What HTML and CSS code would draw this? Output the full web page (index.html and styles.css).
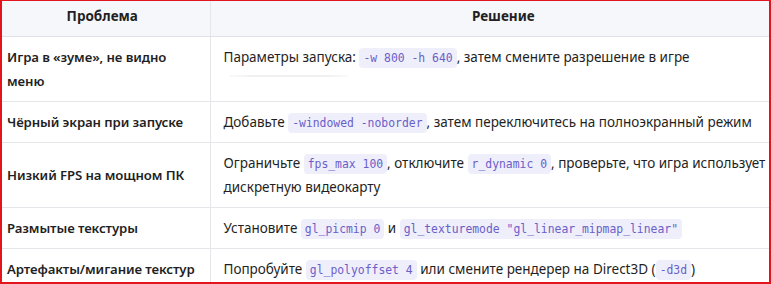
FILE: index.html
```html
<!DOCTYPE html>
<html lang="ru">
<head>
<meta charset="utf-8">
<link rel="stylesheet" href="styles.css">
</head>
<body>
<div class="frame">
  <table class="fixes">
    <thead>
      <tr><th class="col-problem">Проблема</th><th>Решение</th></tr>
    </thead>
    <tbody>
      <tr>
        <td class="problem">Игра в «зуме», не видно меню</td>
        <td>Параметры запуска: <code>-w 800 -h 640</code>, затем смените разрешение в игре<div class="ghost"></div></td>
      </tr>
      <tr>
        <td class="problem">Чёрный экран при запуске</td>
        <td>Добавьте <code>-windowed -noborder</code>, затем переключитесь на полноэкранный режим</td>
      </tr>
      <tr>
        <td class="problem">Низкий FPS на мощном ПК</td>
        <td>Ограничьте <code>fps_max 100</code>, отключите <code>r_dynamic 0</code>, проверьте, что игра использует дискретную видеокарту</td>
      </tr>
      <tr>
        <td class="problem">Размытые текстуры</td>
        <td>Установите <code>gl_picmip 0</code> и <code>gl_texturemode "gl_linear_mipmap_linear"</code></td>
      </tr>
      <tr>
        <td class="problem">Артефакты/мигание текстур</td>
        <td>Попробуйте <code>gl_polyoffset 4</code> или смените рендерер на Direct3D (<code>-d3d</code>)</td>
      </tr>
    </tbody>
  </table>
</div>
</body>
</html>
```
FILE: styles.css
```css
html, body {
  margin: 0;
  padding: 0;
  background: #ffffff;
}
.frame {
  width: 771px;
  height: 284px;
  box-sizing: border-box;
  border: 2px solid #e3141c;
  border-top-width: 1px;
  overflow: hidden;
  background: #ffffff;
}
.fixes {
  border-collapse: collapse;
  table-layout: fixed;
  width: 801px;
  margin-left: -7px;
  margin-top: -5px;
  font-family: "Noto Sans", "Open Sans", sans-serif;
  font-size: 13.5px;
  line-height: 24px;
  color: #1f1f24;
}
.fixes th {
  box-sizing: border-box;
  background: #f6f7fa;
  font-weight: 700;
  text-align: center;
  padding: 8px 12px;
  border-bottom: 1px solid #dfe1e6;
  border-left: 1px solid #e4e6ea;
}
.fixes th.col-problem {
  width: 215px;
  border-left: none;
}
.fixes td {
  padding: 8px 12px 8px 13px;
  border-bottom: 1px solid #e4e6ea;
  border-left: 1px solid #e4e6ea;
  vertical-align: middle;
}
.fixes td.problem {
  font-weight: 600;
  border-left: none;
  padding-left: 12px;
  padding-right: 6px;
  font-size: 13.2px;
  letter-spacing: -0.1px;
}
.fixes code {
  font-family: "DejaVu Sans Mono", "Liberation Mono", monospace;
  font-size: 11.4px;
  line-height: 1;
  color: #6a5fc9;
  background: #efeefb;
  border-radius: 4px;
  padding: 3px 4px;
}
.ghost {
  height: 24px;
  box-sizing: border-box;
  padding-top: 6px;
  margin-left: 5px;
  width: 120px;
}
.ghost::before {
  content: "";
  display: block;
  height: 2px;
  border-radius: 1px;
  background: linear-gradient(90deg, rgba(0,0,0,0.02), rgba(0,0,0,0.06) 20%, rgba(0,0,0,0.06) 80%, rgba(0,0,0,0.02));
}
```
